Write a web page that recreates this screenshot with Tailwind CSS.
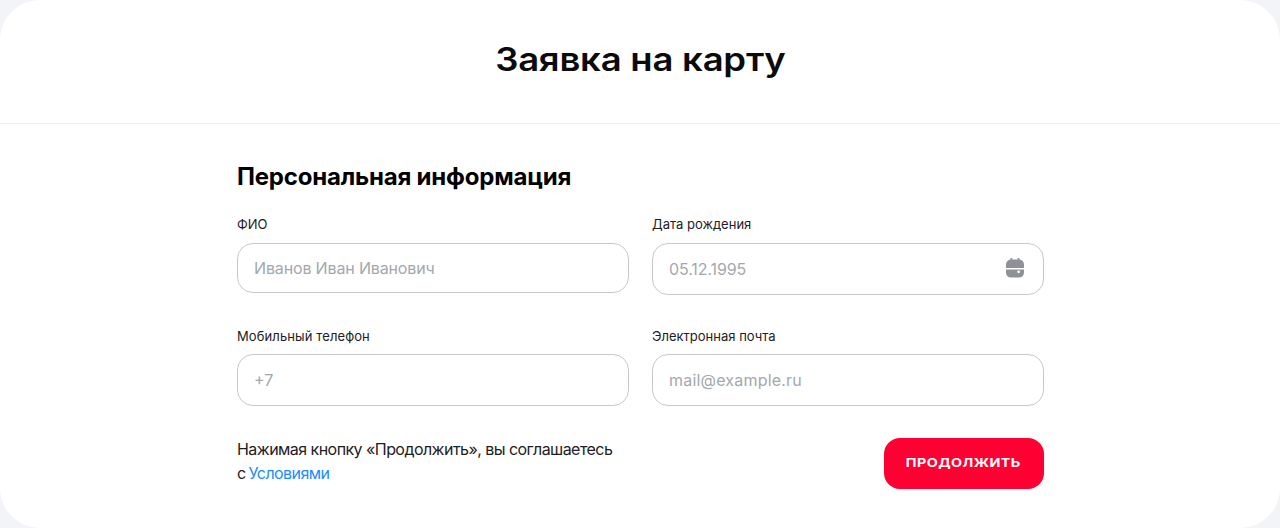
<!DOCTYPE html>
<html lang="ru">
<head>
  <meta charset="UTF-8">
  <meta name="viewport" content="width=device-width, initial-scale=1.0">
  <title>Заявка на карту</title>
  <script src="https://cdn.jsdelivr.net/npm/@tailwindcss/browser@4"></script>
</head>
<body class="bg-[#f3f4f7] h-[528px] overflow-hidden font-['Inter',sans-serif] text-[#1d2023]">
  <div class="bg-white h-[528px] rounded-[40px]">
    <!-- Header -->
    <div class="h-[124px] border-b border-[#eceef0] flex items-center justify-center">
      <h1 class="text-[32px] leading-[40px] font-semibold scale-x-[1.14] tracking-[-0.2px] mt-[-4px] text-[#0b0b0c]">Заявка на карту</h1>
    </div>

    <!-- Form -->
    <div class="w-[807px] ml-[237px] pt-[37px]">
      <h2 class="text-[24px] leading-[32px] font-bold tracking-[-0.2px] text-black">Персональная информация</h2>

      <div class="grid grid-cols-[392px_392px] gap-x-[23px] mt-[23px]">
        <div>
          <label class="block text-[13px] leading-[16px] h-[27px]">ФИО</label>
          <div class="h-[50px] border border-[#c6c9cc] rounded-[16px] flex items-center px-[16px] text-[16px] tracking-[-0.15px] text-[#a3a8ad]">Иванов Иван Иванович</div>
        </div>
        <div>
          <label class="block text-[13px] leading-[16px] h-[27px]">Дата рождения</label>
          <div class="h-[52px] border border-[#c6c9cc] rounded-[16px] flex items-center justify-between pl-[16px] pr-[18px] text-[16px] tracking-[-0.1px] text-[#a3a8ad]">
            <span>05.12.1995</span>
            <svg class="mt-[-3px]" width="20" height="22" viewBox="0 0 20 22" fill="#8e9297">
              <path d="M5.6 1h1.8v3H5.6zM12.6 1h1.8v3h-1.8z"/>
              <path d="M6 2.6h8a5 5 0 0 1 5 5v3.4H1V7.6a5 5 0 0 1 5-5zM1 12.4h18v3.2a5 5 0 0 1-5 5H6a5 5 0 0 1-5-5z"/>
              <circle cx="13.6" cy="14.8" r="1.4" fill="#ffffff"/>
            </svg>
          </div>
        </div>
      </div>

      <div class="grid grid-cols-[392px_392px] gap-x-[23px] mt-[32px]">
        <div>
          <label class="block text-[13px] leading-[16px] h-[27px] pt-[1px] tracking-[0.1px]">Мобильный телефон</label>
          <div class="h-[52px] border border-[#c6c9cc] rounded-[16px] flex items-center px-[16px] text-[16px] text-[#a3a8ad]">+7</div>
        </div>
        <div>
          <label class="block text-[13px] leading-[16px] h-[27px] pt-[1px]">Электронная почта</label>
          <div class="h-[52px] border border-[#c6c9cc] rounded-[16px] flex items-center px-[16px] text-[16px] tracking-[0.2px] text-[#a3a8ad]">mail@example.ru</div>
        </div>
      </div>

      <div class="flex justify-between items-start mt-[32px]">
        <p class="text-[16px] leading-[24px] tracking-[-0.55px] mt-[-1px]">Нажимая кнопку «Продолжить», вы соглашаетесь<br>с <a href="#" class="text-[#1a8cff] ml-[-1px]">Условиями</a></p>
        <button class="w-[160px] h-[51px] rounded-[16px] bg-[#ff0032] text-white text-[12px] font-bold flex items-center justify-center"><span class="scale-x-[1.19] tracking-[0.4px] mt-[-2px] ml-[-2px]">ПРОДОЛЖИТЬ</span></button>
      </div>
    </div>
  </div>
</body>
</html>
